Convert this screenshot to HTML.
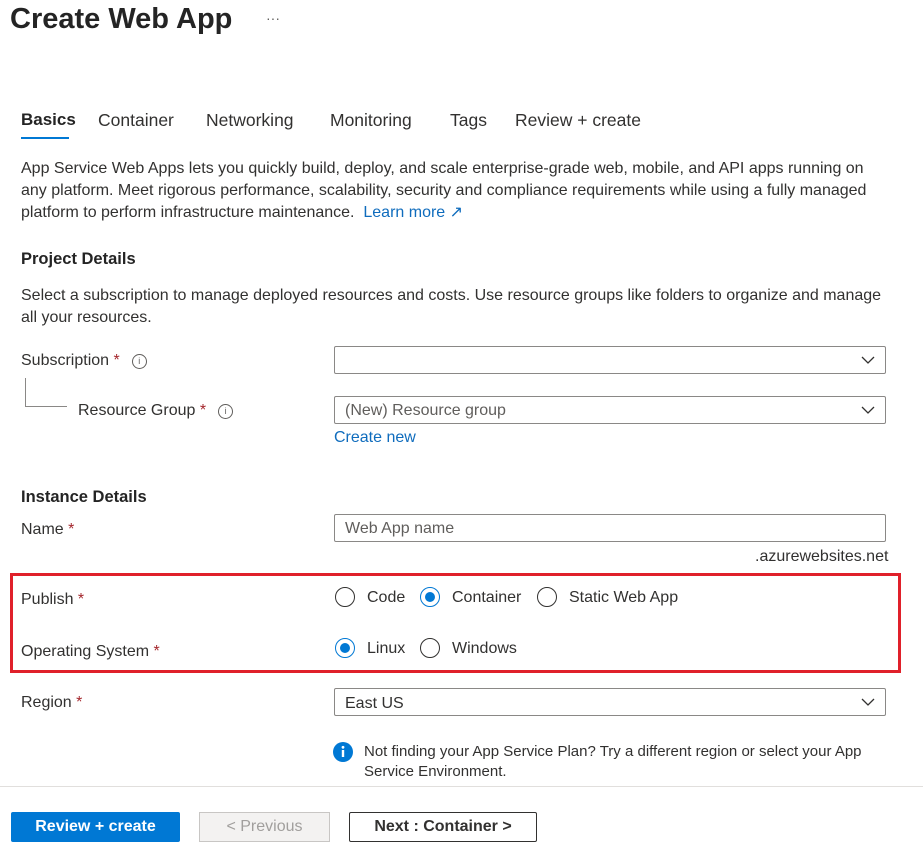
<!DOCTYPE html>
<html><head><meta charset="utf-8"><style>
body{margin:0;width:923px;height:851px;background:#fff;font-family:"Liberation Sans",sans-serif;color:#323130;position:relative;overflow:hidden;font-size:16px}
.a{position:absolute;white-space:nowrap}
.req{color:#a4262c}
.info{display:inline-block;width:13px;height:13px;border:1px solid #605e5c;border-radius:50%;font-size:9px;text-align:center;line-height:13px;color:#605e5c;vertical-align:1px;margin-left:12px}
.box{position:absolute;border:1px solid #8a8886;border-radius:2px;height:28px;box-sizing:border-box;padding-left:10px;line-height:26px;color:#605e5c}
.chev{position:absolute;right:10px;top:8px}
.radio{position:absolute;width:20px;height:20px;border:1px solid #323130;border-radius:50%;box-sizing:border-box}
.radio.on{border-color:#0078d4}
.radio.on::after{content:"";position:absolute;left:4px;top:4px;width:10px;height:10px;border-radius:50%;background:#0078d4}
.link{color:#0f6cbd}
</style></head><body>
<div class="a" style="left:10px;top:3px;font-size:29px;font-weight:bold;color:#242424">Create Web App</div>
<div class="a" style="left:266px;top:10px;font-size:14px;color:#605e5c">···</div>

<div class="a" style="left:21px;top:110px;font-size:17px;font-weight:bold;color:#242424">Basics</div>
<div style="position:absolute;left:21px;top:137px;width:48px;height:2px;background:#0078d4"></div>
<div class="a" style="left:98px;top:110px;font-size:17.5px">Container</div>
<div class="a" style="left:206px;top:110px;font-size:17.5px">Networking</div>
<div class="a" style="left:330px;top:110px;font-size:17.5px">Monitoring</div>
<div class="a" style="left:450px;top:110px;font-size:17.5px">Tags</div>
<div class="a" style="left:515px;top:110px;font-size:17.5px">Review + create</div>

<div class="a" style="left:21px;top:158px;line-height:22px">App Service Web Apps lets you quickly build, deploy, and scale enterprise-grade web, mobile, and API apps running on<br>any platform. Meet rigorous performance, scalability, security and compliance requirements while using a fully managed<br>platform to perform infrastructure maintenance. &nbsp;<span class="link">Learn more ↗</span></div>

<div class="a" style="left:21px;top:250px;font-size:16.5px;font-weight:bold;color:#242424">Project Details</div>
<div class="a" style="left:21px;top:285px;line-height:22px">Select a subscription to manage deployed resources and costs. Use resource groups like folders to organize and manage<br>all your resources.</div>

<div class="a" style="left:21px;top:352px">Subscription <span class="req">*</span><span class="info">i</span></div>
<div style="position:absolute;left:25px;top:378px;width:1px;height:28px;background:#8a8886"></div>
<div style="position:absolute;left:25px;top:406px;width:42px;height:1px;background:#8a8886"></div>
<div class="a" style="left:78px;top:402px">Resource Group <span class="req">*</span><span class="info">i</span></div>
<div class="box" style="left:334px;top:346px;width:552px"><svg class="chev" width="14" height="10"><path d="M1 2l6 6 6-6" fill="none" stroke="#323130" stroke-width="1.3"/></svg></div>
<div class="box" style="left:334px;top:396px;width:552px;line-height:28px">(New) Resource group<svg class="chev" width="14" height="10"><path d="M1 2l6 6 6-6" fill="none" stroke="#323130" stroke-width="1.3"/></svg></div>
<div class="a link" style="left:334px;top:429px">Create new</div>

<div class="a" style="left:21px;top:488px;font-size:16.5px;font-weight:bold;color:#242424">Instance Details</div>
<div class="a" style="left:21px;top:521px">Name <span class="req">*</span></div>
<div class="box" style="left:334px;top:514px;width:552px;line-height:28px">Web App name</div>
<div class="a" style="left:755px;top:548px">.azurewebsites.net</div>

<div style="position:absolute;left:10px;top:573px;width:891px;height:100px;border:3px solid #e0202a;box-sizing:border-box"></div>
<div class="a" style="left:21px;top:591px">Publish <span class="req">*</span></div>
<div class="radio" style="left:335px;top:587px"></div><div class="a" style="left:367px;top:589px">Code</div>
<div class="radio on" style="left:420px;top:587px"></div><div class="a" style="left:452px;top:589px">Container</div>
<div class="radio" style="left:537px;top:587px"></div><div class="a" style="left:569px;top:589px">Static Web App</div>
<div class="a" style="left:21px;top:643px">Operating System <span class="req">*</span></div>
<div class="radio on" style="left:335px;top:638px"></div><div class="a" style="left:367px;top:640px">Linux</div>
<div class="radio" style="left:420px;top:638px"></div><div class="a" style="left:452px;top:640px">Windows</div>

<div class="a" style="left:21px;top:694px">Region <span class="req">*</span></div>
<div class="box" style="left:334px;top:688px;width:552px;color:#323130;line-height:29px">East US<svg class="chev" width="14" height="10"><path d="M1 2l6 6 6-6" fill="none" stroke="#323130" stroke-width="1.3"/></svg></div>

<svg style="position:absolute;left:333px;top:742px" width="20" height="20"><circle cx="10" cy="10" r="10" fill="#0078d4"/><rect x="8.8" y="8" width="2.4" height="7" fill="#fff"/><circle cx="10" cy="5.3" r="1.4" fill="#fff"/></svg>
<div class="a" style="left:364px;top:742px;line-height:20px;font-size:15px">Not finding your App Service Plan? Try a different region or select your App<br>Service Environment.</div>

<div style="position:absolute;left:0;top:786px;width:923px;height:1px;background:#e1dfdd"></div>
<div class="a" style="left:11px;top:812px;width:169px;height:30px;background:#0078d4;color:#fff;font-weight:bold;text-align:center;line-height:30px;border-radius:2px">Review + create</div>
<div class="a" style="left:199px;top:812px;width:131px;height:30px;background:#f3f2f1;color:#a19f9d;border:1px solid #c8c6c4;box-sizing:border-box;text-align:center;line-height:28px">&lt; Previous</div>
<div class="a" style="left:349px;top:812px;width:188px;height:30px;border:1px solid #323130;box-sizing:border-box;font-weight:bold;text-align:center;line-height:28px;border-radius:2px">Next : Container &gt;</div>
</body></html>
